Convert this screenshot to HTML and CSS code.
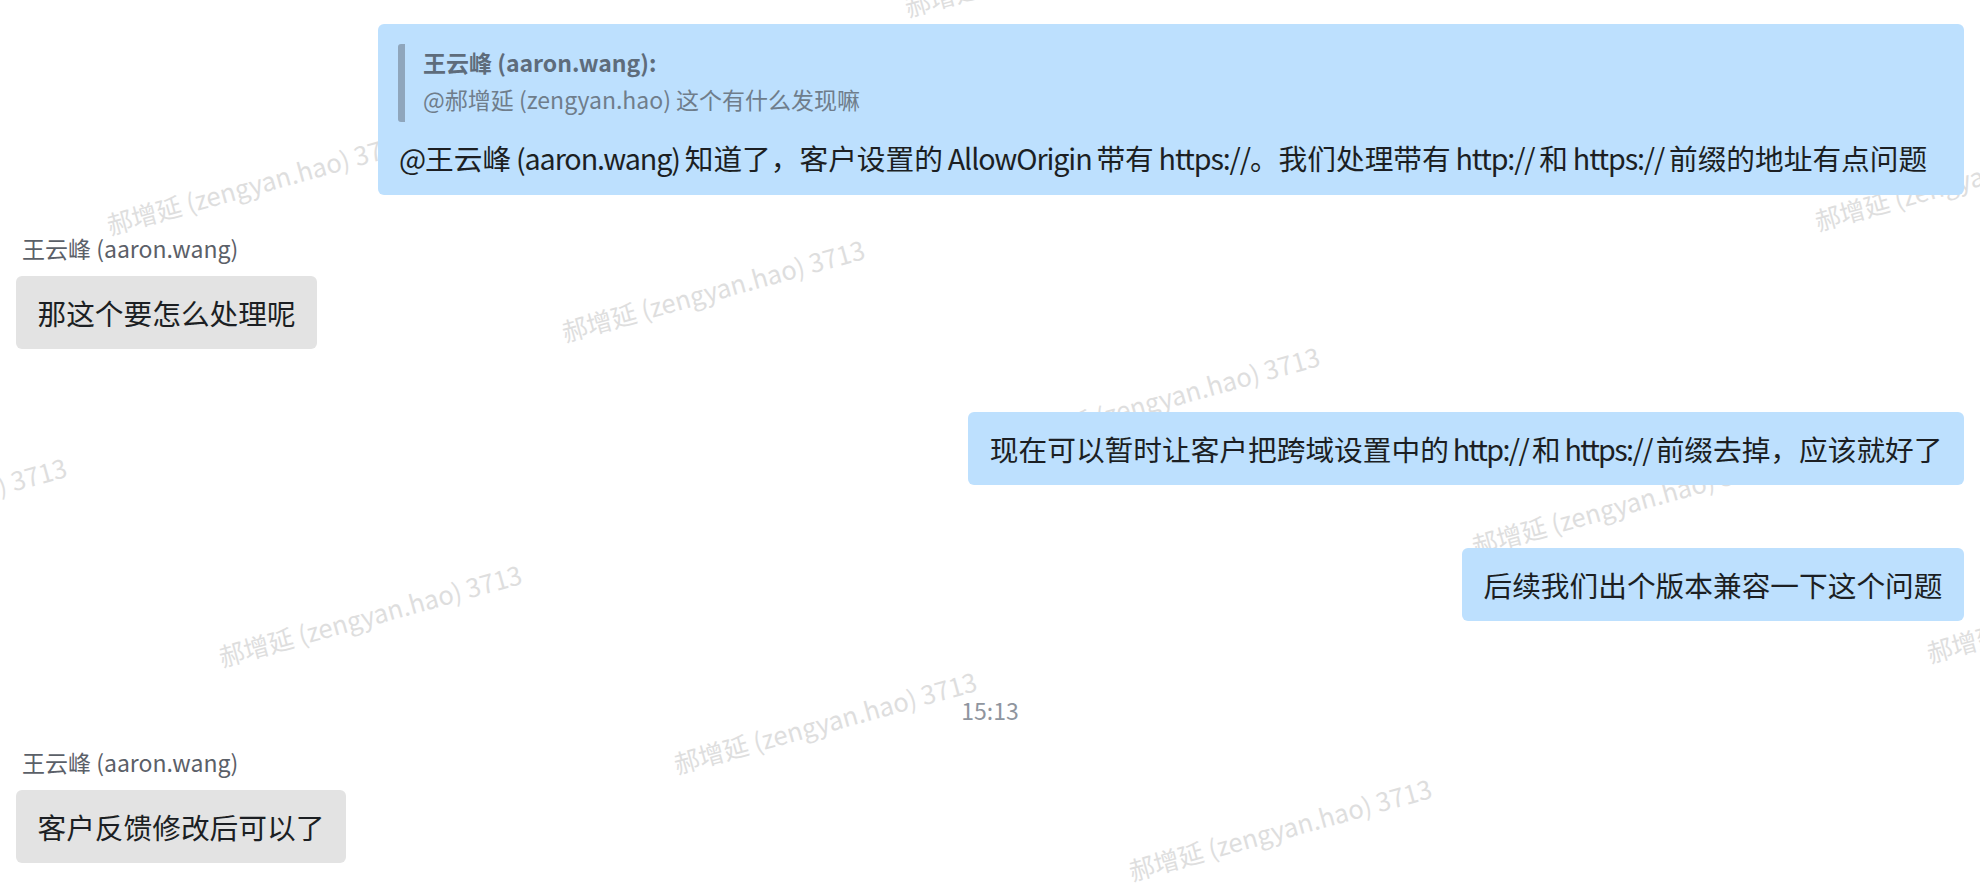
FILE: index.html
```html
<!DOCTYPE html>
<html lang="zh-CN">
<head>
<meta charset="utf-8">
<title>Chat</title>
<link rel="stylesheet" href="styles.css">
</head>
<body>
<div class="page">
  <div class="watermark" aria-hidden="true">
    <span class="wm" style="left:454px;top:-116px">郝增延 (zengyan.hao) 3713</span>
    <span class="wm" style="left:909px;top:-9px">郝增延 (zengyan.hao) 3713</span>
    <span class="wm" style="left:1819px;top:205px">郝增延 (zengyan.hao) 3713</span>
    <span class="wm" style="left:111px;top:209px">郝增延 (zengyan.hao) 3713</span>
    <span class="wm" style="left:566px;top:316px">郝增延 (zengyan.hao) 3713</span>
    <span class="wm" style="left:1021px;top:423px">郝增延 (zengyan.hao) 3713</span>
    <span class="wm" style="left:1476px;top:530px">郝增延 (zengyan.hao) 3713</span>
    <span class="wm" style="left:1931px;top:637px">郝增延 (zengyan.hao) 3713</span>
    <span class="wm" style="left:-232px;top:534px">郝增延 (zengyan.hao) 3713</span>
    <span class="wm" style="left:223px;top:641px">郝增延 (zengyan.hao) 3713</span>
    <span class="wm" style="left:678px;top:748px">郝增延 (zengyan.hao) 3713</span>
    <span class="wm" style="left:1133px;top:855px">郝增延 (zengyan.hao) 3713</span>
  </div>

  <div class="chat">
    <div class="row right first">
      <div class="bubble blue quoted">
        <div class="quote">
          <div class="quote-name">王云峰 (aaron.wang):</div>
          <div class="quote-text">@郝增延 (zengyan.hao) 这个有什么发现嘛</div>
        </div>
        <div class="text"><span class="lat">@</span>王云峰<span class="lat"> (aaron.wang) </span>知道了，客户设置的<span class="lat"> AllowOrigin </span>带有<span class="lat"> https://</span>。我们处理带有<span class="lat"> http:// </span>和<span class="lat"> https:// </span>前缀的地址有点问题</div>
      </div>
    </div>

    <div class="group left after-bubble">
      <div class="sender">王云峰 (aaron.wang)</div>
      <div class="bubble gray">那这个要怎么处理呢</div>
    </div>

    <div class="row right spaced">
      <div class="bubble blue">现在可以暂时让客户把跨域设置中的<span class="lat tight"> http:// </span>和<span class="lat tight"> https:// </span>前缀去掉，应该就好了</div>
    </div>

    <div class="row right spaced">
      <div class="bubble blue">后续我们出个版本兼容一下这个问题</div>
    </div>

    <div class="time">15:13</div>

    <div class="group left after-time">
      <div class="sender">王云峰 (aaron.wang)</div>
      <div class="bubble gray">客户反馈修改后可以了</div>
    </div>
  </div>
</div>
</body>
</html>
```

FILE: styles.css
```css
* {
  box-sizing: border-box;
}

html, body {
  margin: 0;
  padding: 0;
  background: #ffffff;
}

body {
  font-family: "Noto Sans CJK SC", "Noto Sans", sans-serif;
  color: #1c1f23;
}

.page {
  position: relative;
  width: 1980px;
  height: 888px;
  overflow: hidden;
  background: #ffffff;
}

.watermark {
  position: absolute;
  inset: 0;
  z-index: 0;
  pointer-events: none;
  overflow: hidden;
}

.wm {
  position: absolute;
  font-size: 25.5px;
  line-height: 30px;
  white-space: nowrap;
  color: #dedede;
  transform-origin: 0 100%;
  transform: rotate(-15.5deg);
}

.chat {
  position: relative;
  z-index: 1;
  display: flex;
  flex-direction: column;
  padding: 24px 16px 0 16px;
}

.row {
  display: flex;
}

.row.right {
  justify-content: flex-end;
}

.row.spaced {
  margin-top: 63px;
}

.group {
  display: flex;
  flex-direction: column;
  align-items: flex-start;
}

.group.after-bubble {
  margin-top: 37px;
}

.group.after-time {
  margin-top: 20px;
}

.sender {
  font-size: 23px;
  line-height: 32px;
  color: #5b6068;
  margin-bottom: 12px;
  padding-left: 6px;
}

.bubble {
  font-size: 28.7px;
  line-height: 44px;
  padding: 14.5px 21.5px;
  border-radius: 6px;
  white-space: nowrap;
}

.lat {
  letter-spacing: -1.1px;
  word-spacing: -0.5px;
}

.lat.tight {
  letter-spacing: -1.6px;
  word-spacing: -1px;
}

.bubble.blue {
  background: #bde0fe;
}

.bubble.gray {
  background: #e3e3e3;
}

.bubble.quoted {
  width: 1586px;
  padding: 14.5px 21.5px 15.5px 20px;
}

.quote {
  margin-top: 5.5px;
  margin-bottom: 13.5px;
  border-left: 7px solid #8fa6bc;
  border-radius: 3px;
  padding-left: 18px;
  font-size: 23px;
  line-height: 37px;
  padding-bottom: 4px;
}

.quote-name {
  font-weight: 700;
  color: #5e6c7b;
}

.quote-text {
  color: #6f7d8b;
}

.quoted .text {
  padding-left: 1px;
}

.time {
  align-self: center;
  margin-top: 73px;
  font-size: 23px;
  line-height: 32px;
  color: #8f959e;
}
```
